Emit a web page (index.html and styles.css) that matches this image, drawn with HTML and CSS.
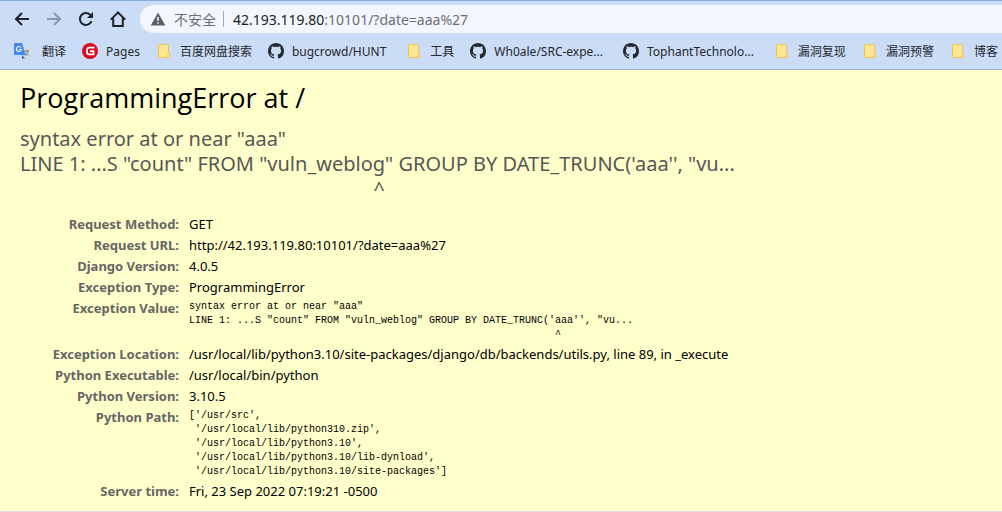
FILE: index.html
```html
<!DOCTYPE html>
<html lang="en">
<head>
<meta charset="utf-8">
<title>ProgrammingError at /</title>
<link rel="stylesheet" href="styles.css">
</head>
<body>
<svg class="defs" aria-hidden="true">
  <symbol id="folder" viewBox="0 0 16 16">
    <path d="M2.500 1.500h10v9h1v4h-11z" fill="#ffe694" stroke="#eec34f"/>
    <path d="M12.500 10.500h1v4h-2v-2z" fill="#fff0b8" stroke="#eec34f"/>
  </symbol>
  <symbol id="github" viewBox="0 0 16 16">
    <path fill="#24292f" d="M8 0C3.580 0 0 3.580 0 8c0 3.540 2.290 6.530 5.470 7.590.4.070.55-.17.55-.38 0-.19-.01-.82-.01-1.490-2.010.37-2.530-.49-2.690-.94-.09-.23-.48-.94-.82-1.130-.28-.15-.68-.52-.01-.53.63-.01 1.080.58 1.230.82.72 1.210 1.870.87 2.330.66.07-.52.28-.87.51-1.070-1.780-.2-3.640-.89-3.640-3.950 0-.87.31-1.590.82-2.150-.08-.2-.36-1.020.08-2.120 0 0 .67-.21 2.200.82.64-.18 1.320-.27 2-.27s1.360.09 2 .27c1.530-1.040 2.200-.82 2.200-.82.44 1.100.16 1.920.08 2.120.51.56.82 1.270.82 2.150 0 3.070-1.870 3.750-3.650 3.950.29.25.54.73.54 1.480 0 1.070-.01 1.930-.01 2.200 0 .21.15.46.55.38A8.010 8.010 0 0 0 16 8c0-4.420-3.580-8-8-8z"/>
  </symbol>
</svg>

<header class="browser">
  <div class="toolbar">
    <nav class="controls" aria-label="Navigation">
      <button class="control" type="button" aria-label="Back"><svg viewBox="0 0 16 16"><path d="M15 8H2M8 2L2 8l6 6"/></svg></button>
      <button class="control control-off" type="button" aria-label="Forward"><svg viewBox="0 0 16 16"><path d="M1 8h13M8 2l6 6-6 6"/></svg></button>
      <button class="control" type="button" aria-label="Reload"><svg viewBox="0 0 16 16"><path d="M13.500 10.200A6 6 0 1 1 12.600 4.200L14 5.600"/><path class="solid" d="M15 1v6H9z"/></svg></button>
      <button class="control" type="button" aria-label="Home"><svg viewBox="0 0 16 16"><path d="M.8 8.600L8 1.500l7.200 7.100M3.200 7v8h9.600V7"/></svg></button>
    </nav>
    <div class="address">
      <svg class="warning" viewBox="0 0 16 16" aria-hidden="true"><path d="M8 1.500L15.300 14.500H.7z" fill="#5c6066"/><path d="M7.200 6h1.600v4H7.200zM7.200 11.200h1.600v1.600H7.200z" fill="#f3f7fd"/></svg>
      <span class="insecure">不安全</span>
      <span class="divider"></span>
      <a class="url" href="#"><span class="host">42.193.119.80</span>:10101/?date=aaa%27</a>
    </div>
  </div>
  <nav class="bookmarks" aria-label="Bookmarks">
    <a class="bookmark" href="#"><svg class="icon icon-wide" viewBox="0 0 20 16"><path d="M6 5h9.500v10.500H9z" fill="#d5d7da"/><path d="M8 12l3 3.500H8z" fill="#315db5"/><path d="M1 0h7l3.500 12H1a1 1 0 0 1-1-1V1a1 1 0 0 1 1-1z" fill="#4688f1"/><path d="M6.800 4.500A2.500 2.500 0 1 0 7.300 6.500H5" fill="none" stroke="#fff" stroke-width="1.100"/><path d="M10.500 8h4.500M12.500 7v1M14 8c-.4 2-1.500 3.500-3 4.500M11.500 9.500c.7 1.500 1.800 2.300 3 3" fill="none" stroke="#68818a"/></svg><span>翻译</span></a>
    <a class="bookmark" href="#"><svg class="icon" viewBox="0 0 16 16"><circle cx="8" cy="8" r="8" fill="#db0b22"/><path d="M12.500 4.700H7a2 2 0 0 0-2 2v2.600a2 2 0 0 0 2 2h4.500V8.200H8" fill="none" stroke="#fff" stroke-width="1.800"/></svg><span>Pages</span></a>
    <a class="bookmark" href="#"><svg class="icon"><use href="#folder"/></svg><span>百度网盘搜索</span></a>
    <a class="bookmark repo" href="#"><svg class="icon"><use href="#github"/></svg><span>bugcrowd/HUNT</span></a>
    <a class="bookmark" href="#"><svg class="icon"><use href="#folder"/></svg><span>工具</span></a>
    <a class="bookmark repo" href="#"><svg class="icon"><use href="#github"/></svg><span>Wh0ale/SRC-expe...</span></a>
    <a class="bookmark repo" href="#"><svg class="icon"><use href="#github"/></svg><span>TophantTechnolo...</span></a>
    <a class="bookmark" href="#"><svg class="icon"><use href="#folder"/></svg><span>漏洞复现</span></a>
    <a class="bookmark" href="#"><svg class="icon"><use href="#folder"/></svg><span>漏洞预警</span></a>
    <a class="bookmark" href="#"><svg class="icon"><use href="#folder"/></svg><span>博客</span></a>
  </nav>
</header>

<main class="summary">
  <h1 class="title">ProgrammingError at /</h1>
  <pre class="message">syntax error at or near "aaa"
LINE 1: ...S "count" FROM "vuln_weblog" GROUP BY DATE_TRUNC('aaa'', "vu...
                                                                    ^</pre>
  <table class="meta">
    <tr><th scope="row">Request Method:</th><td>GET</td></tr>
    <tr><th scope="row">Request URL:</th><td>http://42.193.119.80:10101/?date=aaa%27</td></tr>
    <tr><th scope="row">Django Version:</th><td>4.0.5</td></tr>
    <tr><th scope="row">Exception Type:</th><td>ProgrammingError</td></tr>
    <tr><th scope="row">Exception Value:</th><td><pre class="code">syntax error at or near "aaa"
LINE 1: ...S "count" FROM "vuln_weblog" GROUP BY DATE_TRUNC('aaa'', "vu...
                                                             ^</pre></td></tr>
    <tr><th scope="row">Exception Location:</th><td>/usr/local/lib/python3.10/site-packages/django/db/backends/utils.py, line 89, in _execute</td></tr>
    <tr><th scope="row">Python Executable:</th><td>/usr/local/bin/python</td></tr>
    <tr><th scope="row">Python Version:</th><td>3.10.5</td></tr>
    <tr><th scope="row">Python Path:</th><td><pre class="code">['/usr/src',
 '/usr/local/lib/python310.zip',
 '/usr/local/lib/python3.10',
 '/usr/local/lib/python3.10/lib-dynload',
 '/usr/local/lib/python3.10/site-packages']</pre></td></tr>
    <tr><th scope="row">Server time:</th><td>Fri, 23 Sep 2022 07:19:21 -0500</td></tr>
  </table>
</main>
</body>
</html>
```
FILE: styles.css
```css
* { box-sizing: border-box; margin: 0; padding: 0; }
body {
  background: #fff;
  color: #000;
  font: 13px/17px "Noto Sans", "Noto Sans CJK SC", sans-serif;
}
a { color: inherit; text-decoration: none; }
.defs { display: none; }

.browser {
  background: #cbdcf7;
  border-top: 1px solid #82a9e8;
  border-bottom: 1px solid #9cb1d2;
  color: #24272c;
  overflow: hidden;
}
.toolbar { display: flex; align-items: center; padding: 4px 0 0 14px; }
.controls { display: flex; gap: 16px; }
.control { width: 16px; height: 16px; border: 0; background: none; color: #202329; }
.control svg { display: block; width: 16px; height: 16px; fill: none; stroke: currentColor; stroke-width: 2; }
.control .solid { fill: currentColor; stroke: none; }
.control-off { color: #8795ae; }
.address {
  display: flex;
  flex: 1;
  align-items: center;
  height: 28px;
  margin-left: 14px;
  padding-left: 10px;
  border-radius: 14px 0 0 14px;
  background: #f3f7fd;
  color: #6b6f75;
  font-size: 14px;
}
.warning { width: 16px; height: 16px; margin-right: 8px; }
.divider { width: 1px; height: 16px; margin: 0 9px 0 7px; background: #a4a8ae; }
.host { color: #202124; }
.bookmarks {
  display: flex;
  gap: 16px;
  height: 36px;
  align-items: center;
  padding-left: 14px;
  font-size: 12px;
  white-space: nowrap;
}
.bookmark { display: flex; flex: none; align-items: center; gap: 8px; }
.repo { padding-right: 4px; }
.icon { width: 16px; height: 16px; }
.icon-wide { width: 20px; }

.summary {
  background: #ffffcc;
  border-bottom: 1px solid #ddd;
  padding: 10px 20px 9px;
}
.title { font: 400 27px/36px "Open Sans", sans-serif; }
.message {
  margin: 10px 0 13px;
  color: #575757;
  font-family: inherit;
  font-size: 20px;
  line-height: 25px;
  white-space: pre-wrap;
}
.meta { border-collapse: collapse; }
.meta th { width: 163px; padding: 2px 4px 2px 0; color: #666; text-align: right; vertical-align: top; font-weight: 700; }
.meta td { padding: 2px 0 2px 6px; vertical-align: top; }
.code { font: 10px/14px "Liberation Mono", monospace; white-space: pre-wrap; }
```
